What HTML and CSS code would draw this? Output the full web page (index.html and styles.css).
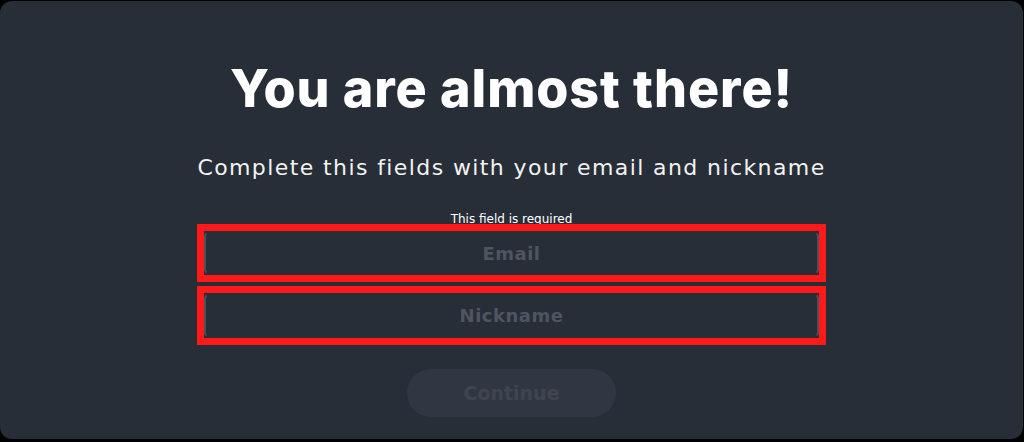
FILE: index.html
```html
<!DOCTYPE html>
<html lang="en">
	<head>
		<meta charset="UTF-8">
		<title>Almost there</title>
		<link rel="stylesheet" href="styles.css">
	</head>
	<body>
		<main class="panel">
			<h1 class="title">You are almost there!</h1>
			<p class="lead">Complete this fields with your email and nickname</p>
			<form class="form">
				<span class="error">This field is required</span>
				<div class="field invalid">
					<input type="text" placeholder="Email">
				</div>
				<div class="field invalid">
					<input type="text" placeholder="Nickname">
				</div>
				<button type="button" class="btn" disabled>Continue</button>
			</form>
		</main>
	</body>
</html>
```

FILE: styles.css
```css
* {
	margin: 0;
	padding: 0;
	box-sizing: border-box;
}

body {
	background: #000;
	font-family: "DejaVu Sans", "Noto Sans", sans-serif;
}

.panel {
	height: 438px;
	margin: 1px 1px 3px 0;
	border-radius: 12px;
	background: #282e37;
	display: flex;
	flex-direction: column;
	align-items: center;
	padding-top: 58px;
}

.title {
	color: #fff;
	font-family: Inter, "Noto Sans", sans-serif;
	font-size: 52px;
	font-weight: 800;
	line-height: 60px;
	letter-spacing: 0.9px;
}

.lead {
	margin-top: 35px;
	color: #f2f2f2;
	font-size: 22px;
	font-weight: 400;
	line-height: 28px;
	letter-spacing: 1.4px;
}

.form {
	margin-top: 28px;
	display: flex;
	flex-direction: column;
	align-items: center;
}

.error {
	margin: 2px 0 -2px;
	color: #fff;
	font-size: 12px;
	line-height: 14px;
}

.field {
	width: 629px;
	height: 58px;
	margin-bottom: 4px;
}

.field + .field {
	height: 59px;
}

.field.invalid {
	border: 7px solid #ff1a1a;
}

.field input {
	width: 100%;
	height: 100%;
	border: 2px solid;
	border-color: transparent #4a515c;
	border-radius: 6px;
	background: transparent;
	color: #fff;
	font-family: inherit;
	font-size: 18px;
	font-weight: 700;
	letter-spacing: 0.5px;
	text-align: center;
	outline: none;
}

.field input::placeholder {
	color: #4e5561;
}

.btn {
	margin-top: 20px;
	width: 209px;
	height: 48px;
	border: 0;
	border-radius: 24px;
	background: #313742;
	color: #3f4550;
	font-family: inherit;
	font-size: 19px;
	font-weight: 700;
}
```
